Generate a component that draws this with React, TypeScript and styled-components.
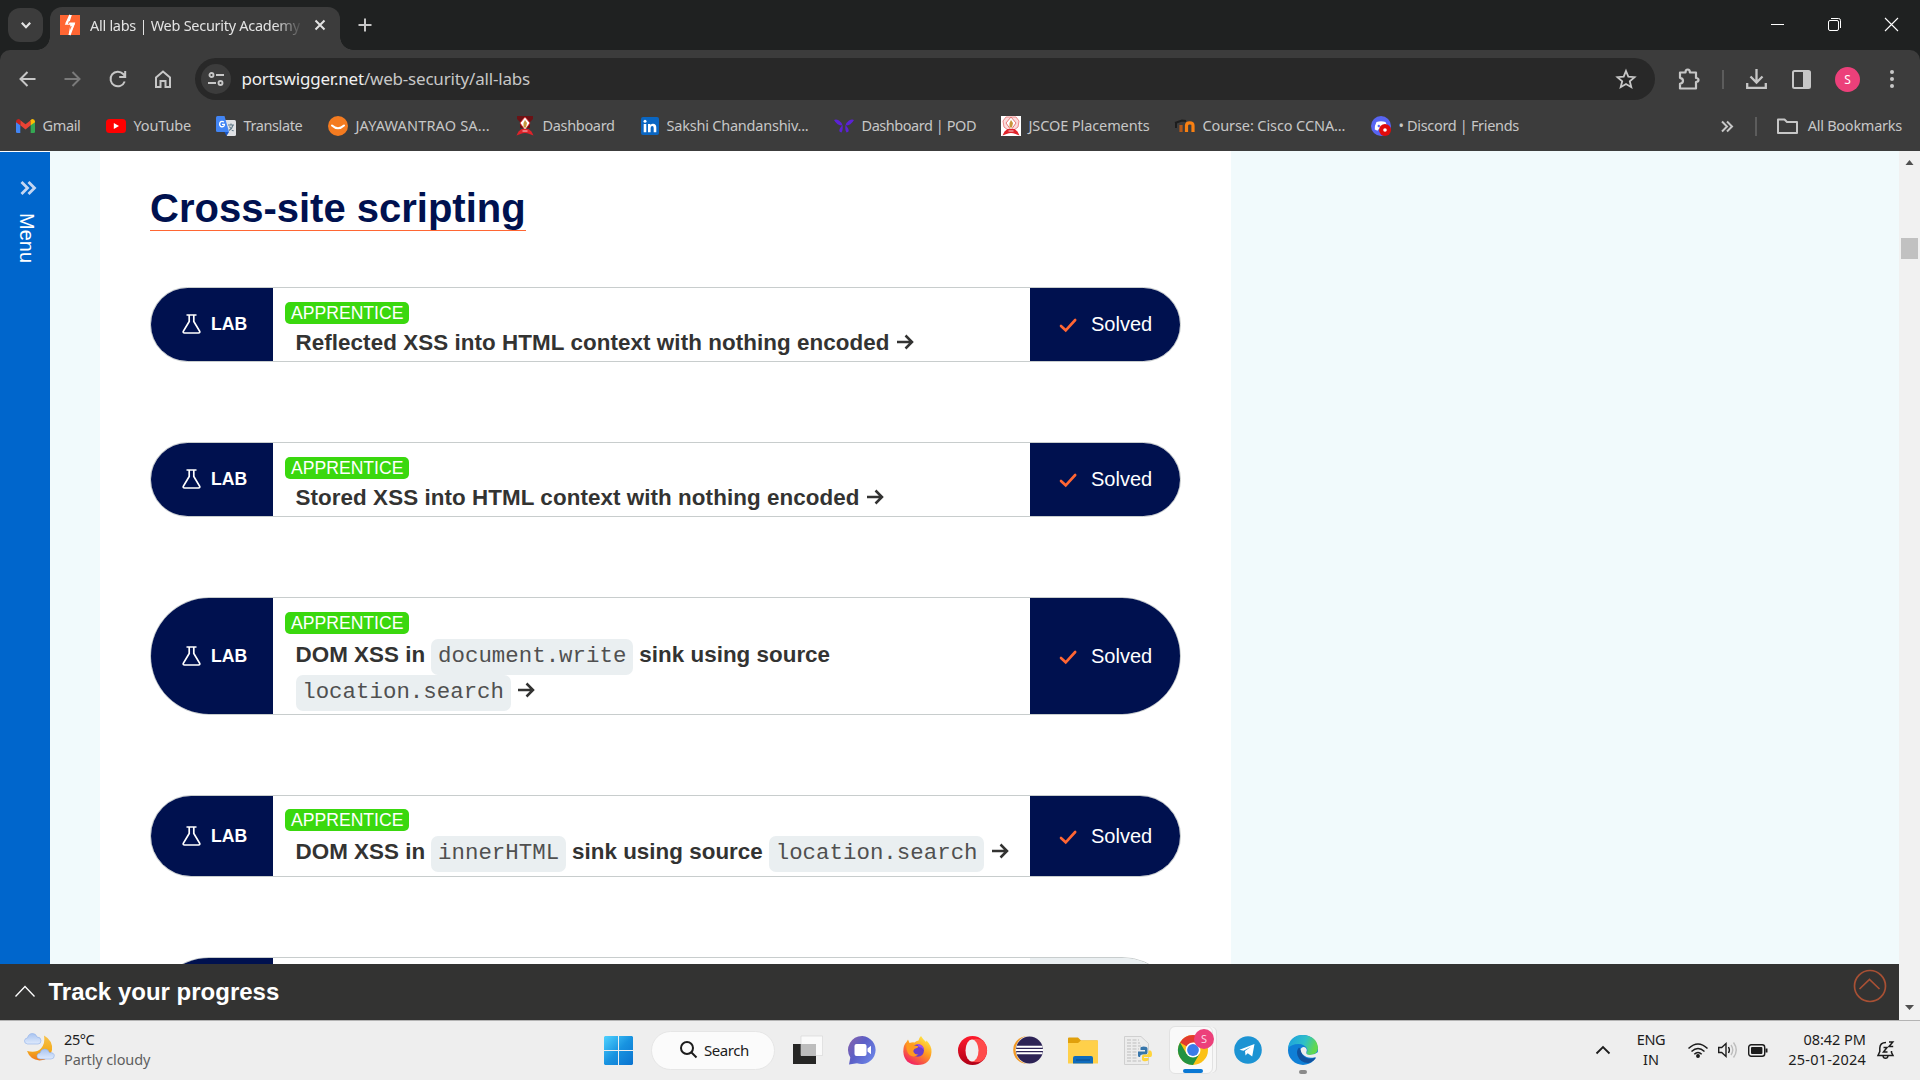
import React from "react";
import styled, { createGlobalStyle } from "styled-components";

const UI = `"Noto Sans", "Open Sans", sans-serif`;
const ARIAL = `"Liberation Sans", Arial, sans-serif`;

const Global = createGlobalStyle`
  html, body { margin: 0; padding: 0; }
  body { width: 1920px; height: 1080px; overflow: hidden; background: #fff; }
  *, *::before, *::after { box-sizing: border-box; }
  svg { display: block; flex: none; overflow: visible; }
`;

const Screen = styled.div`
  display: flex;
  flex-direction: column;
  width: 1920px;
  height: 1080px;
  overflow: hidden;
  font-family: ${UI};
`;

/* ---------- browser chrome ---------- */

const TabStrip = styled.header`
  display: flex;
  height: 50px;
  background: #1f2121;
`;
const TabSearch = styled.button`
  display: flex;
  align-items: center;
  justify-content: center;
  width: 35px;
  height: 34px;
  margin: 8px 7px 0 8px;
  padding: 0;
  border: 0;
  border-radius: 12px;
  background: #3c3c3c;
`;
const Tab = styled.div`
  position: relative;
  display: flex;
  align-items: center;
  width: 290px;
  height: 43px;
  margin-top: 7px;
  padding: 0 15px 7px 10px;
  border-radius: 12px 12px 0 0;
  background: #3c3c3c;
  &::before, &::after {
    content: "";
    position: absolute;
    bottom: 0;
    width: 13px;
    height: 13px;
  }
  &::before { left: -13px; background: radial-gradient(circle at 0 0, transparent 12.5px, #3c3c3c 13px); }
  &::after { right: -13px; background: radial-gradient(circle at 100% 0, transparent 12.5px, #3c3c3c 13px); }
`;
const TabTitle = styled.span`
  flex: 1;
  margin: 0 15px 0 10px;
  overflow: hidden;
  white-space: nowrap;
  font-size: 14.5px;
  line-height: 22px;
  letter-spacing: -0.28px;
  color: #e3e3e3;
  mask-image: linear-gradient(90deg, #000 185px, transparent 213px);
`;
const NewTab = styled.button`
  display: flex;
  margin: 18px 0 0 18px;
  padding: 0;
  border: 0;
  background: none;
`;
const WindowButtons = styled.div`
  display: flex;
  gap: 44px;
  margin: 18px 22px 0 auto;
`;
const Toolbar = styled.div`
  display: flex;
  align-items: center;
  height: 58px;
  padding: 0 22px 0 18px;
  background: linear-gradient(#1f2121, #1f2121) top / 100% 12px no-repeat, #3c3c3c;
  position: relative;
  z-index: 0;
  &::before {
    content: "";
    position: absolute;
    inset: 0;
    z-index: -1;
    border-radius: 10px 10px 0 0;
    background: #3c3c3c;
  }
`;
const NavIcons = styled.div`
  display: flex;
  align-items: center;
  gap: 25px;
  margin-right: 22px;
`;
const Omnibox = styled.div`
  display: flex;
  align-items: center;
  width: 1462px;
  height: 42px;
  padding: 0 19px 0 6px;
  border-radius: 21px;
  background: #282828;
`;
const SiteInfo = styled.span`
  display: flex;
  align-items: center;
  justify-content: center;
  width: 30px;
  height: 30px;
  border-radius: 50%;
  background: #3c3c3c;
`;
const Url = styled.span`
  flex: 1;
  margin-left: 10.5px;
  font-size: 17px;
  line-height: 24px;
  letter-spacing: -0.2px;
  color: #c7c7c7;
  b { font-weight: 400; color: #f0f0f0; }
`;
const ToolbarRight = styled.div`
  display: flex;
  align-items: center;
  flex: 1;
  margin-left: 23px;
  gap: 22px;
`;
const Separator = styled.i<{ $h: number }>`
  flex: none;
  width: 2px;
  height: ${(p) => p.$h}px;
  background: #5c5c5c;
`;
const Avatar = styled.span`
  display: flex;
  align-items: center;
  justify-content: center;
  width: 25px;
  height: 25px;
  margin: 0 4px 0 1px;
  border-radius: 50%;
  background: #ec407a;
  color: #fff;
  font-size: 12px;
`;
const Bookmarks = styled.nav`
  display: flex;
  align-items: center;
  height: 43px;
  padding: 0 18px 7px 16px;
  background: #3c3c3c;
`;
const Bookmark = styled.a<{ $w: number }>`
  display: flex;
  align-items: center;
  gap: 7.5px;
  width: ${(p) => p.$w}px;
  white-space: nowrap;
`;
const Label = styled.span<{ $ls?: number }>`
  padding-bottom: 2px;
  font-size: 14.5px;
  line-height: 20px;
  letter-spacing: ${(p) => p.$ls ?? 0}px;
  color: #c7c7c7;
  white-space: nowrap;
`;
const BookmarksEnd = styled.div`
  display: flex;
  align-items: center;
  margin-left: auto;
  i { margin: 0 20px 0 22px; }
  span { margin-left: 10px; }
`;

/* ---------- web page ---------- */

const Viewport = styled.div`
  display: flex;
  height: 869px;
`;
const PageColumn = styled.div`
  display: flex;
  flex-direction: column;
  width: 1899px;
`;
const PageBody = styled.div`
  display: flex;
  height: 813px;
  overflow: hidden;
  background: #f1fafc;
`;
const SideMenu = styled.aside`
  display: flex;
  flex-direction: column;
  align-items: center;
  width: 50px;
  padding: 29px 0 0 5px;
  border-top: 1px solid #fff;
  background: #0066cc;
`;
const MenuLabel = styled.span`
  margin: 18px 2px 0 0;
  writing-mode: vertical-rl;
  font: 20px/24px ${ARIAL};
  color: #fff;
`;
const Article = styled.main`
  width: 1131px;
  margin-left: 50px;
  padding: 35px 50px 0;
  background: #fff;
  font-family: ${ARIAL};
  color: #333332;
`;
const Heading = styled.h2`
  width: fit-content;
  margin: 0 0 56px;
  border-bottom: 1px solid #ff6633;
  font-size: 40px;
  line-height: 44px;
  color: #00114f;
`;
const Lab = styled.section<{ $h: number }>`
  display: flex;
  height: ${(p) => p.$h}px;
  margin-bottom: 80px;
  border: 1px solid #c8cdcd;
  border-radius: 60px;
  overflow: hidden;
`;
const LabTag = styled.div`
  display: flex;
  align-items: center;
  width: 122px;
  padding-left: 31px;
  gap: 10px;
  background: #00114f;
  color: #fff;
  font-size: 17.6px;
  font-weight: 700;
  svg { margin-top: -1px; }
`;
const LabBody = styled.div<{ $top: number }>`
  flex: 1;
  padding: ${(p) => p.$top}px 0 0 12px;
`;
const Level = styled.div`
  width: fit-content;
  height: 22px;
  padding: 0 6px;
  border-radius: 5px;
  background: #3ad80e;
  color: #fff;
  font-size: 17.6px;
  line-height: 22px;
`;
const LabTitle = styled.div<{ $code?: boolean }>`
  padding: ${(p) => (p.$code ? 4 : 1.5)}px 0 0 10.5px;
  font-size: 22.4px;
  line-height: ${(p) => (p.$code ? 34.5 : 33)}px;
  letter-spacing: ${(p) => (p.$code ? 0.02 : 0.07)}px;
  font-weight: 700;
  white-space: nowrap;
  svg { display: inline-block; vertical-align: 0; margin-left: 1px; }
`;
const Code = styled.code`
  padding: 4px 6.7px 6px;
  border-radius: 7px;
  background: #eaeff1;
  color: #505050;
  font: 400 22.4px "Liberation Mono", "Courier New", monospace;
  line-height: inherit;
`;
const Status = styled.div<{ $solved: boolean }>`
  display: flex;
  align-items: center;
  gap: 15px;
  width: 150px;
  padding-left: 30px;
  background: ${(p) => (p.$solved ? "#00114f" : "#eaeff1")};
  color: #fff;
  font-size: 20px;
  svg { margin-top: 1px; }
`;
const TrackBar = styled.footer`
  display: flex;
  height: 56px;
  padding: 0 13px 0 15px;
  background: #333332;
`;
const TrackTitle = styled.span`
  flex: 1;
  margin: 14px 0 0 13.5px;
  font: 700 24px/28px ${ARIAL};
  color: #fff;
`;
const Scrollbar = styled.div`
  display: flex;
  flex-direction: column;
  align-items: center;
  width: 21px;
  background: #f1f1f1;
`;
const Thumb = styled.div`
  width: 17px;
  height: 21px;
  margin: 73px 0 auto;
  background: #c1c1c1;
`;

/* ---------- taskbar ---------- */

const Taskbar = styled.div`
  display: flex;
  align-items: center;
  height: 60px;
  padding: 0 26px 1px 24px;
  border-top: 1px solid #b4b4b4;
  background: #eee;
`;
const Slot = styled.div<{ $ml: number; $w: number }>`
  display: flex;
  flex: none;
  justify-content: center;
  width: ${(p) => p.$w}px;
  margin-left: ${(p) => p.$ml}px;
`;
const WeatherSlot = styled.div`
  padding-bottom: 5px;
`;
const TwoLines = styled.div<{ $ml: number; $w: number; $align?: string }>`
  flex: none;
  width: ${(p) => p.$w}px;
  margin-left: ${(p) => p.$ml}px;
  padding-bottom: 2px;
  text-align: ${(p) => p.$align ?? "left"};
  white-space: nowrap;
`;
const Line = styled.div<{ $ls?: number; $dim?: boolean }>`
  height: 20px;
  font-size: 14.5px;
  line-height: 20px;
  letter-spacing: ${(p) => p.$ls ?? 0}px;
  color: ${(p) => (p.$dim ? "#5f5f5f" : "#1c1c1c")};
`;
const SearchPill = styled.div`
  display: flex;
  align-items: center;
  gap: 7px;
  width: 124px;
  height: 39px;
  margin-left: 18px;
  padding: 0 0 1px 28px;
  border: 1px solid #e6e6e6;
  border-radius: 20px;
  background: #fbfbfb;
  color: #1c1c1c;
  font-size: 15px;
  letter-spacing: -0.45px;
`;
const ActiveApp = styled.div`
  position: relative;
  display: flex;
  justify-content: center;
  align-items: center;
  flex: none;
  width: 44px;
  height: 48px;
  margin: 0 4px 0 17px;
  border: 1px solid #e2e2e2;
  border-radius: 6px;
  background: #f9f9f9;
  box-shadow: 4px 0 0 -1px #f6f6f6, 5px 0 0 -1px #ddd;
  & > svg { margin-left: 3px; }
`;
const AppBadge = styled.span`
  position: absolute;
  top: 2px;
  right: -2px;
  width: 20px;
  height: 20px;
  border-radius: 50%;
  background: #ec407a;
  color: #fbd5e2;
  font-size: 11px;
  line-height: 20px;
  text-align: center;
`;
const RunMark = styled.i<{ $w: number; $c: string; $b: number; $shift?: number }>`
  position: absolute;
  bottom: ${(p) => p.$b}px;
  left: calc(50% - ${(p) => p.$w / 2 - (p.$shift ?? 0)}px);
  width: ${(p) => p.$w}px;
  height: 4px;
  border-radius: 2px;
  background: ${(p) => p.$c};
`;
const RunningApp = styled.div`
  position: relative;
  margin-left: 26px;
`;

/* ---------- icons ---------- */

type LineIconProps = { w: number; h: number; c?: string; s?: number; children: React.ReactNode };
const LineIcon = ({ w, h, c = "#c7c7c7", s = 2, children }: LineIconProps) => (
  <svg width={w} height={h} viewBox={`0 0 ${w} ${h}`} fill="none" stroke={c} strokeWidth={s}>
    {children}
  </svg>
);

const PortSwigger = () => (
  <svg width="20" height="20" viewBox="0 0 20 20">
    <path fill="#ff6633" d="M0 0h20v20H0z" />
    <path fill="none" stroke="#fff" strokeWidth="2.200" d="M10.300 0L6.500 8.600h7.200L9.500 20" />
    <path fill="#fff" d="M10.300 0h1.500L9.300 8H5.500zM10.500 8.500H15L9.800 20H8.700z" />
    <path fill="#ff6633" d="M8.800 6.200h1.400l-1.200 2.600-1 .1zM10.200 11.200h1.600L10 15z" />
  </svg>
);
const Flask = () => (
  <LineIcon w={19} h={20} c="#fff" s={1.7}>
    <path d="M4.500 1h10M7.200 1v6.500L1.300 17.300Q.8 19 2.500 19h14Q18.200 19 17.700 17.300L11.800 7.500V1" />
  </LineIcon>
);
const Arrow = () => (
  <LineIcon w={17} h={16} c="#333332" s={2.5}>
    <path d="M0 8h14.500M8.500 1.500L15 8l-6.500 6.500" />
  </LineIcon>
);
const Check = () => (
  <LineIcon w={16} h={14} c="#ff6633" s={2.6}>
    <path d="M1 8l4.700 4.300L15.200 2" strokeLinecap="round" />
  </LineIcon>
);
const Gmail = () => (
  <svg width="19" height="14" viewBox="0 0 19 14">
    <path fill="#4285f4" d="M0 2.500l4.300 3V14H1.300Q0 14 0 12.700z" />
    <path fill="#34a853" d="M19 2.500l-4.300 3V14h3q1.300 0 1.300-1.300z" />
    <path fill="#ea4335" d="M4.300 1.200L9.500 5.300l5.200-4.100v5L9.500 10.400 4.300 6.200z" />
    <path fill="#c5221f" d="M0 2.500Q.2 0 2.500 0q1 0 1.800 1.200v5L0 3.300z" />
    <path fill="#fbbc04" d="M19 2.500Q18.800 0 16.500 0q-1 0-1.800 1.200v5L19 3.300z" />
  </svg>
);
const YouTube = () => (
  <svg width="20" height="14" viewBox="0 0 20 14">
    <rect width="20" height="14" rx="3.500" fill="#f00" />
    <path fill="#fff" d="M7.800 4l5.200 3-5.200 3z" />
  </svg>
);
const Translate = () => (
  <svg width="20" height="20" viewBox="0 0 20 20">
    <path fill="#dfe1e5" d="M8 4h10.500Q20 4 20 5.500v13q0 1.500-1.500 1.500H11z" />
    <path fill="none" stroke="#607988" strokeWidth="1.100" d="M12 9h6M15 7.500V9M17 9q-1 4-4 5.500M13.500 10.500Q15 13.500 17.500 15" />
    <path fill="#4285f4" d="M1.500 0H8.500L13 16H1.500Q0 16 0 14.500V1.500Q0 0 1.500 0z" />
    <path fill="#1a56c4" d="M8.500 16H13l-2.500 4z" />
    <path fill="none" stroke="#fff" strokeWidth="1.300" d="M8 6Q5.500 4.500 4 6.500 3 9 4.700 10.500 8.500 11.500 8.400 8.300H6" />
  </svg>
);
const Smile = () => (
  <svg width="20" height="20" viewBox="0 0 20 20">
    <circle cx="10" cy="10" r="10" fill="#f47b20" />
    <path d="M4 9.500Q10 15 16 9.500" fill="none" stroke="#fff" strokeWidth="2" strokeLinecap="round" />
  </svg>
);
const Crest = ({ bg }: { bg?: string }) => (
  <svg width="20" height="20" viewBox="0 0 20 20">
    {bg && <path fill={bg} d="M0 0h20v20H0z" />}
    {bg ? (
      <path fill="#fbdcdc" stroke="#e88" d="M5 1h10l3 4-1 6-4 3H7l-4-3-1-6z" />
    ) : (
      <path fill="#6b1215" d="M2 0h16v3l-3 3v6H5V6L2 3z" />
    )}
    <path fill="#fff" stroke={bg ? "#e05a5a" : "#d22"} strokeWidth=".8" d="M10 1l5 6-5 7-5-7z" />
    <path fill="#c8963c" d="M10 4l2 3-1 4.500H8.500V7z" />
    <path fill="#e0222a" d="M6.500 13h7l3 2.500 2 4-4-1.500q-4.500-2-9 0l-4 1.500 2-4z" />
    <path stroke="#fff" strokeWidth=".8" d="M7.500 15h5" />
  </svg>
);
const LinkedIn = () => (
  <svg width="18" height="18" viewBox="0 0 18 18">
    <rect width="18" height="18" rx="2" fill="#0a66c2" />
    <path fill="#fff" d="M2.700 7h2.600v8.300H2.700zM7 7h2.500v1.200Q10.300 6.800 12 6.800q3.300 0 3.300 3.700v4.800h-2.600v-4.300q0-2-1.400-2-1.700 0-1.700 2v4.300H7z" />
    <circle cx="4" cy="4.200" r="1.500" fill="#fff" />
  </svg>
);
const Pod = () => (
  <svg width="20" height="14" viewBox="0 0 20 14" fill="#5b21d6">
    <path d="M0 1q2-1 5 .5 3 2 3.500 5Q3 6.500 0 1zM20 1q-2-1-5 .5-3 2-3.500 5Q17 6.500 20 1z" />
    <path d="M8.500 6q.8 5-1 7.500-3.500-.5-1.500-4.300zM11.500 6q-.8 5 1 7.500 3.500-.5 1.500-4.300z" />
  </svg>
);
const Moodle = () => (
  <svg width="20" height="14" viewBox="0 0 20 14" fill="none" strokeWidth="3.200">
    <path stroke="#b5591a" d="M6 13V6" />
    <path stroke="#f98012" d="M11.500 13V6.500q0-2.700 3.300-2.700T18 6.500V13" />
    <path stroke="#1d1d1d" strokeWidth="2" d="M0 4l7-2.500 4 .5M1 4v5" />
  </svg>
);
const Discord = () => (
  <svg width="20" height="20" viewBox="0 0 20 20">
    <circle cx="10" cy="10" r="10" fill="#5865f2" />
    <path fill="#fff" d="M5.500 6Q10 4.500 14.500 6q2 3.500 1.700 7.500l-2.700 1.200-1-1.500h-5l-1 1.500-2.700-1.200Q3.500 9.500 5.500 6z" />
    <circle cx="7.800" cy="10" r="1.200" fill="#5865f2" />
    <circle cx="14" cy="14" r="6" fill="#e00b0b" />
    <circle cx="14" cy="14" r="1.800" fill="#fff" />
  </svg>
);
const Weather = () => (
  <svg width="31" height="29" viewBox="0 0 31 29">
    <defs>
      <linearGradient id="moon" x1="0" y1="0" x2="0" y2="1">
        <stop offset="0" stopColor="#f8c34a" />
        <stop offset=".6" stopColor="#f3ab1e" />
        <stop offset="1" stopColor="#f0791c" />
      </linearGradient>
      <linearGradient id="cloud" x1="0" y1="0" x2="0" y2="1">
        <stop offset="0" stopColor="#a9c4f0" />
        <stop offset="1" stopColor="#dfeafc" />
      </linearGradient>
    </defs>
    <path fill="url(#moon)" d="M20 2.500q9 5 8 14.500Q26 27.500 15.500 27.500 6 26.500 3 18q9 2.500 14-2.500 4.500-5.500 3-13z" />
    <path fill="url(#cloud)" stroke="#8fb0ea" strokeWidth=".6" d="M3.500 11Q0 10.500.5 7.500 1 5 3.500 5 4.500.500 8.500.500q3.500 0 4.500 3.500 4 0 4 3.500T14 11z" />
    <path fill="url(#cloud)" stroke="#8fb0ea" strokeWidth=".6" d="M16 26q-3.500-.5-3-3.500.5-2.500 3-2.500 1-4 4.800-4 3.500 0 4.500 3.500 5 0 5 3.200T27 26z" />
  </svg>
);
const Windows = () => (
  <svg width="29" height="29" viewBox="0 0 29 29">
    <defs>
      <linearGradient id="win" x1="0" y1="0" x2="1" y2="1">
        <stop offset="0" stopColor="#4fd2ff" />
        <stop offset=".5" stopColor="#1893e0" />
        <stop offset="1" stopColor="#0a72cf" />
      </linearGradient>
    </defs>
    <path fill="url(#win)" d="M1 0h13v14H0V1zM15 0h13l1 1v13H15zM0 15h14v14H1l-1-1zM15 15h14v13l-1 1H15z" />
  </svg>
);
const TaskView = () => (
  <svg width="30" height="28" viewBox="0 0 30 28">
    <path fill="#262625" d="M0 8h23v20H0z" />
    <path fill="#fafafa" stroke="#d5d5d5" strokeWidth=".6" d="M8 0h21.500v19.500H8z" />
    <path fill="#bdbdbd" d="M8 8h15v11.500H8z" />
  </svg>
);
const Chat = () => (
  <svg width="29" height="29" viewBox="0 0 29 29">
    <defs>
      <linearGradient id="chat" x1="0" y1="0" x2="1" y2=".7">
        <stop offset="0" stopColor="#8a62a8" />
        <stop offset=".5" stopColor="#5b5fc7" />
        <stop offset="1" stopColor="#6b83e6" />
      </linearGradient>
    </defs>
    <path fill="url(#chat)" d="M14.500 0A14 14 0 1 1 9 27.200L1 28.500l1.300-7A14 14 0 0 1 14.500 0z" />
    <rect x="6.500" y="8" width="12" height="12" rx="2" fill="#fff" />
    <path fill="#fff" d="M19.500 12.500l3.500-2.800v8.600l-3.500-2.800z" />
  </svg>
);
const Firefox = () => (
  <svg width="29" height="29" viewBox="0 0 29 29">
    <defs>
      <linearGradient id="fx" x1=".8" y1="0" x2=".2" y2="1">
        <stop offset="0" stopColor="#fff04a" />
        <stop offset=".45" stopColor="#ff9a1f" />
        <stop offset="1" stopColor="#f0136b" />
      </linearGradient>
    </defs>
    <path fill="url(#fx)" d="M18 0q2 3.500 5 6l.5-1.500Q29 10 28.500 16 27.500 29 14.500 29 1 28.500.300 15.500.200 9 3.500 6L5 3.500l1.500 3.500q3-1 5-.5Q13 5 15.500 4.500q.5-3 2.500-4.500z" />
    <circle cx="14.800" cy="14.500" r="6.200" fill="#6b3fc9" />
    <path fill="#ff9a1f" d="M3.500 8q5-2 8 1.500l4 .8q-.5 2-3 2.200-2.500 1-2 3.500 1.500 3 5 2.500-5 3.500-9 .5-4-4-3-11z" />
    <path fill="#a04df0" d="M14 8q6-.5 7 6-2-3-5-3z" />
  </svg>
);
const Opera = () => (
  <svg width="29" height="29" viewBox="0 0 29 29">
    <defs>
      <linearGradient id="op" x1="0" y1="0" x2="0" y2="1">
        <stop offset="0" stopColor="#ff1b2d" />
        <stop offset="1" stopColor="#b00017" />
      </linearGradient>
    </defs>
    <circle cx="14.500" cy="14.500" r="14.500" fill="url(#op)" />
    <path fill="#ff4b4b" d="M12 4q9-3 14 1.500a14.500 14.500 0 0 1 0 18Q21 28 12 25z" />
    <ellipse cx="14" cy="14.500" rx="6.500" ry="11" fill="#f0f0f0" />
  </svg>
);
const Eclipse = () => (
  <svg width="30" height="28" viewBox="0 0 30 28">
    <circle cx="14" cy="14" r="13.800" fill="#f39a26" />
    <circle cx="16.700" cy="14" r="14.200" fill="#eee" />
    <circle cx="16.500" cy="14" r="13.500" fill="#2c2255" />
    <path stroke="#fff" strokeWidth="2" d="M3.500 10.800h26M3 14h27M3.500 17.200h26" />
  </svg>
);
const Folder = () => (
  <svg width="30" height="27" viewBox="0 0 30 27">
    <path fill="#e0a00c" d="M0 1.500Q0 .500 1 .500h9l3 3h16.500v6H0z" />
    <path fill="#ffd04a" d="M0 6h10l3-2.500h17V26.500H0z" />
    <path fill="#0f6cbd" d="M5 26.500V21q0-2 2-2h16q2 0 2 2v5.500z" />
    <path stroke="#0a4a8a" strokeWidth="1" d="M8 23h14" />
  </svg>
);
const PythonFile = () => (
  <svg width="28" height="29" viewBox="0 0 28 29">
    <path fill="#ececec" stroke="#d0d0d0" d="M.500.500H17l7.500 7v21H.500z" />
    <path stroke="#bdbdbd" strokeDasharray="4 1.500" d="M3 4h12M3 7h13M3 10h14M3 13h12M3 16h10M3 19h10M3 22h10M3 25h14" />
    <path fill="#3776ab" d="M14 18v-2.500h7V14h-4.500v-2q0-1.500 3-1.500 4 0 4 2v4q0 2-2 2h-3.500q-2 0-2 2.500H15q-1.500-.5-1-2.500z" />
    <path fill="#ffd43b" d="M24.500 14.500h2Q28 15 28 18q0 3-1.500 3H20v1h4.500v1.500q0 1.700-3.200 1.700T18 23.200v-2.700q0-2 2-2h2.500q2 0 2-2z" />
  </svg>
);
const Chrome = () => (
  <svg width="30" height="30" viewBox="0 0 30 30">
    <circle cx="15" cy="15" r="15" fill="#fbc116" />
    <path fill="#e33b2e" d="M15 15L2 7.500A15 15 0 0 1 28 7.500H15z" />
    <path fill="#229342" d="M2 7.500A15 15 0 0 0 15 30L21.500 18.700 8.500 18.700z" />
    <circle cx="15" cy="15" r="7.500" fill="#fff" />
    <circle cx="15" cy="15" r="5.900" fill="#3a7bea" />
  </svg>
);
const Telegram = () => (
  <svg width="28" height="28" viewBox="0 0 28 28">
    <circle cx="14" cy="14" r="13.800" fill="#1c93d3" />
    <path fill="#fff" d="M5.500 13.800L20.500 8l-2.300 12.500-4.500-3.200-2.200 2.200-.5-4.500 6-4.200-7.500 4z" />
  </svg>
);
const Edge = () => (
  <svg width="30" height="30" viewBox="0 0 30 30">
    <defs>
      <linearGradient id="ed" x1="0" y1="0" x2="1" y2=".3">
        <stop offset="0" stopColor="#1b9de2" />
        <stop offset=".6" stopColor="#2fc0c8" />
        <stop offset="1" stopColor="#62d84e" />
      </linearGradient>
    </defs>
    <circle cx="15" cy="15" r="15" fill="#0f7fd6" />
    <path fill="url(#ed)" d="M0 13.500Q1.500 0 15 0q14 1 15 13-.5 7-8 7-4.500 0-3.500-2.500 1.500-1.500.5-4Q16.500 9 10.500 9 3 9 0 13.500z" />
    <path fill="#10529e" d="M11 12.500q-3 3-1.500 8 3 8 11.500 7.500 5-2 7-5.500-5 2-9.500.5-5.500-3-4.500-7.500z" />
    <path fill="#eee" d="M12.500 14q2.500-3.500 5.500-1 1.800 2.300.3 4.500-.5 2.200 3.700 2.500 4.500 0 8.200-3L31 20l-2.500 3q-1-.8-1.500-.8-5 1.300-8.500-.2-5.500-2.500-6-8z" />
  </svg>
);

/* ---------- data ---------- */

const bookmarks: { icon: React.ReactNode; text: string; w: number; ls: number }[] = [
  { icon: <Gmail />, text: "Gmail", w: 90, ls: -0.35 },
  { icon: <YouTube />, text: "YouTube", w: 110, ls: -0.15 },
  { icon: <Translate />, text: "Translate", w: 112, ls: -0.4 },
  { icon: <Smile />, text: "JAYAWANTRAO SA...", w: 187, ls: 0.16 },
  { icon: <Crest />, text: "Dashboard", w: 126, ls: -0.33 },
  { icon: <LinkedIn />, text: "Sakshi Chandanshiv...", w: 193, ls: -0.22 },
  { icon: <Pod />, text: "Dashboard | POD", w: 167, ls: -0.45 },
  { icon: <Crest bg="#fff" />, text: "JSCOE Placements", w: 174, ls: -0.1 },
  { icon: <Moodle />, text: "Course: Cisco CCNA...", w: 196, ls: -0.1 },
  { icon: <Discord />, text: "• Discord | Friends", w: 160, ls: -0.33 },
];

const labs: { h: number; top: number; code?: boolean; solved: boolean; title: React.ReactNode }[] = [
  { h: 75, top: 14, solved: true, title: <>Reflected XSS into HTML context with nothing encoded <Arrow /></> },
  { h: 75, top: 14, solved: true, title: <>Stored XSS into HTML context with nothing encoded <Arrow /></> },
  {
    h: 118, top: 14, code: true, solved: true,
    title: <>DOM XSS in <Code>document.write</Code> sink using source<br /><Code>location.search</Code> <Arrow /></>,
  },
  {
    h: 82, top: 13, code: true, solved: true,
    title: <>DOM XSS in <Code>innerHTML</Code> sink using source <Code>location.search</Code> <Arrow /></>,
  },
  { h: 118, top: 14, solved: false, title: null },
];

export default function App() {
  return (
    <Screen>
      <Global />
      <TabStrip>
        <TabSearch>
          <LineIcon w={10} h={7} c="#e3e3e3" s={2.2}><path d="M.8.800L5 5.200 9.200.800" /></LineIcon>
        </TabSearch>
        <Tab>
          <PortSwigger />
          <TabTitle>All labs | Web Security Academy</TabTitle>
          <LineIcon w={10} h={10} c="#e3e3e3"><path d="M.5.500l9 9M9.500.500l-9 9" /></LineIcon>
        </Tab>
        <NewTab>
          <LineIcon w={14} h={14}><path d="M7 .500v13M.500 7h13" /></LineIcon>
        </NewTab>
        <WindowButtons>
          <LineIcon w={13} h={13} c="#fff" s={1}><path d="M0 6.500h13" /></LineIcon>
          <LineIcon w={13} h={13} c="#fff" s={1}>
            <rect x=".5" y="2.500" width="10" height="10" rx="1.500" />
            <path d="M3 .500h7.500q2 0 2 2V10" />
          </LineIcon>
          <LineIcon w={13} h={13} c="#fff" s={1.1}><path d="M0 0l13 13M13 0L0 13" /></LineIcon>
        </WindowButtons>
      </TabStrip>

      <Toolbar>
        <NavIcons>
          <LineIcon w={20} h={18}><path d="M17.500 9H3M9.500 2L2.500 9l7 7" /></LineIcon>
          <LineIcon w={20} h={18} c="#7a7a7a"><path d="M1.500 9H16M9.500 2l7 7-7 7" /></LineIcon>
          <LineIcon w={20} h={18}><path d="M16.700 11.500A7.300 7.300 0 1 1 15.200 4L17 6M17.200 1v6h-6" /></LineIcon>
          <LineIcon w={20} h={18}><path d="M3 7.500L10 1.500l7 6V17h-4.500v-6h-5v6H3z" /></LineIcon>
        </NavIcons>
        <Omnibox>
          <SiteInfo>
            <LineIcon w={16} h={14} s={1.9}>
              <circle cx="3.500" cy="3" r="2" /><path d="M8 3h8M0 11h8" /><circle cx="12.500" cy="11" r="2" />
            </LineIcon>
          </SiteInfo>
          <Url><b>portswigger.net</b>/web-security/all-labs</Url>
          <LineIcon w={20} h={20} s={1.8}>
            <path d="M10 2l2.300 5.700 6.200.5-4.700 4 1.500 6L10 15l-5.300 3.200 1.500-6-4.700-4 6.200-.5z" />
          </LineIcon>
        </Omnibox>
        <ToolbarRight>
          <LineIcon w={22} h={22} s={2.2}>
            <path d="M2 4.500h5.500q0-3 2.200-3t2.200 3H18v5.500q2.500.2 2.500 2t-2.500 2v6.500H2v-4.700q3-.5 3-3t-3-3z" strokeLinejoin="round" />
          </LineIcon>
          <Separator $h={19} />
          <LineIcon w={21} h={20} s={2.3}><path d="M10.500 0v13M4.500 7.500l6 6 6-6M1.200 14v4.800h18.600V14" /></LineIcon>
          <svg width="23" height="19" viewBox="-3 0 23 19">
            <rect x="1" y="1" width="17" height="17" rx="1.500" fill="none" stroke="#c7c7c7" strokeWidth="2" />
            <path fill="#c7c7c7" d="M11 1h7v17h-7z" />
          </svg>
          <Avatar>S</Avatar>
          <svg width="12" height="20" viewBox="0 0 12 20" fill="#c7c7c7">
            <circle cx="6" cy="3" r="2" /><circle cx="6" cy="10" r="2" /><circle cx="6" cy="17" r="2" />
          </svg>
        </ToolbarRight>
      </Toolbar>

      <Bookmarks>
        {bookmarks.map((b) => (
          <Bookmark key={b.text} $w={b.w}>
            {b.icon}
            <Label $ls={b.ls}>{b.text}</Label>
          </Bookmark>
        ))}
        <BookmarksEnd>
          <LineIcon w={12} h={11}><path d="M1 .500l5 5-5 5M6 .500l5 5-5 5" /></LineIcon>
          <Separator $h={19} />
          <LineIcon w={21} h={16}><path d="M1 1.500h6.500l2.500 2.500h10v11H1z" strokeLinejoin="round" /></LineIcon>
          <Label $ls={-0.25}>All Bookmarks</Label>
        </BookmarksEnd>
      </Bookmarks>

      <Viewport>
        <PageColumn>
          <PageBody>
            <SideMenu>
              <LineIcon w={16} h={14} c="#c4d6f2" s={2.8}><path d="M1.500 1l6 6-6 6M8.500 1l6 6-6 6" /></LineIcon>
              <MenuLabel>Menu</MenuLabel>
            </SideMenu>
            <Article>
              <Heading>Cross-site scripting</Heading>
              {labs.map((lab, i) => (
                <Lab key={i} $h={lab.h}>
                  <LabTag>{lab.title && <><Flask /><span>LAB</span></>}</LabTag>
                  <LabBody $top={lab.top}>
                    {lab.title && <Level>APPRENTICE</Level>}
                    {lab.title && <LabTitle $code={lab.code}>{lab.title}</LabTitle>}
                  </LabBody>
                  <Status $solved={lab.solved}>{lab.solved && <><Check /><span>Solved</span></>}</Status>
                </Lab>
              ))}
            </Article>
          </PageBody>
          <TrackBar>
            <Slot $ml={0} $w={20}>
              <svg width="20" height="34" viewBox="0 0 20 34" fill="none" stroke="#fff" strokeWidth="1.300"><path d="M.5 32.500L10 22.500l9.500 10" /></svg>
            </Slot>
            <TrackTitle>Track your progress</TrackTitle>
            <svg width="32" height="38" viewBox="0 0 32 38" fill="none" stroke="#a85034" strokeWidth="1.700">
              <circle cx="16" cy="22" r="15.500" /><path d="M5.500 25l10-9.500 10 9.500" />
            </svg>
          </TrackBar>
        </PageColumn>
        <Scrollbar>
          <svg width="9" height="14" viewBox="0 0 9 14"><path fill="#505050" d="M.500 14l4-5 4 5z" /></svg>
          <Thumb />
          <svg width="9" height="15" viewBox="0 0 9 15"><path fill="#505050" d="M0 0h9L4.500 5z" /></svg>
        </Scrollbar>
      </Viewport>

      <Taskbar>
        <WeatherSlot><Weather /></WeatherSlot>
        <TwoLines $ml={9} $w={92}>
          <Line $ls={-0.4}>25°C</Line>
          <Line $dim $ls={-0.12}>Partly cloudy</Line>
        </TwoLines>
        <Slot $ml={448} $w={29}><Windows /></Slot>
        <SearchPill>
          <LineIcon w={17} h={17} c="#1c1c1c"><circle cx="7" cy="7" r="6" /><path d="M11.500 11.500l5 5" /></LineIcon>
          <span>Search</span>
        </SearchPill>
        <Slot $ml={18} $w={30}><TaskView /></Slot>
        <Slot $ml={25} $w={29}><Chat /></Slot>
        <Slot $ml={26} $w={29}><Firefox /></Slot>
        <Slot $ml={26} $w={29}><Opera /></Slot>
        <Slot $ml={26} $w={30}><Eclipse /></Slot>
        <Slot $ml={25} $w={30}><Folder /></Slot>
        <Slot $ml={26} $w={28}><PythonFile /></Slot>
        <ActiveApp>
          <Chrome />
          <AppBadge>S</AppBadge>
          <RunMark $w={20} $c="#0a78d4" $b={0} $shift={2} />
        </ActiveApp>
        <Slot $ml={17} $w={28}><Telegram /></Slot>
        <RunningApp>
          <Edge />
          <RunMark $w={8} $c="#8a8a8a" $b={-9} />
        </RunningApp>
        <Slot $ml={278} $w={14}>
          <LineIcon w={14} h={8} c="#1c1c1c" s={1.8}><path d="M.5 7.500L7 1l6.500 6.500" /></LineIcon>
        </Slot>
        <TwoLines $ml={22} $w={38} $align="center">
          <Line $ls={-0.3}>ENG</Line>
          <Line>IN</Line>
        </TwoLines>
        <Slot $ml={18} $w={20}>
          <LineIcon w={20} h={15} c="#1c1c1c" s={1.500}>
            <path d="M.5 5.500Q10-3.500 19.500 5.500M3.500 8.500q6.500-6 13 0M6.300 11.200q3.700-3.500 7.400 0" />
            <circle cx="10" cy="13" r="1.200" fill="#1c1c1c" />
          </LineIcon>
        </Slot>
        <Slot $ml={10} $w={20}>
          <LineIcon w={20} h={16} c="#1c1c1c" s={1.400}>
            <path d="M.7 5.500h3L8 1.500v13L3.700 10.500h-3zM10.500 5q1.800 3 0 6" />
            <path stroke="#bdbdbd" d="M13 3q3.500 5 0 10M15.500.500q5.500 7.500 0 15" />
          </LineIcon>
        </Slot>
        <Slot $ml={10} $w={20}>
          <LineIcon w={20} h={13} c="#1c1c1c" s={1.400}>
            <rect x=".7" y=".7" width="16" height="11.600" rx="2.500" />
            <rect x="3" y="3" width="11.400" height="7" rx="1" fill="#1c1c1c" stroke="none" />
            <path d="M18.500 4.500v4" strokeWidth="2" />
          </LineIcon>
        </Slot>
        <TwoLines $ml={18} $w={80} $align="right">
          <Line $ls={-0.02}>08:42 PM</Line>
          <Line $ls={0.2}>25-01-2024</Line>
        </TwoLines>
        <Slot $ml={11} $w={17}>
          <LineIcon w={17} h={18} c="#1c1c1c" s={1.500}>
            <path d="M9 1.500Q3 1.500 2.800 7v3.500L1 14.500h15l-1.500-3V10M6 15q.3 2.300 2.500 2.300T11 15" />
            <path d="M6.500 6.500h3.500l-3.500 4.500h4M12 1h3.800l-3.800 4.500h4.200" />
          </LineIcon>
        </Slot>
      </Taskbar>
    </Screen>
  );
}
